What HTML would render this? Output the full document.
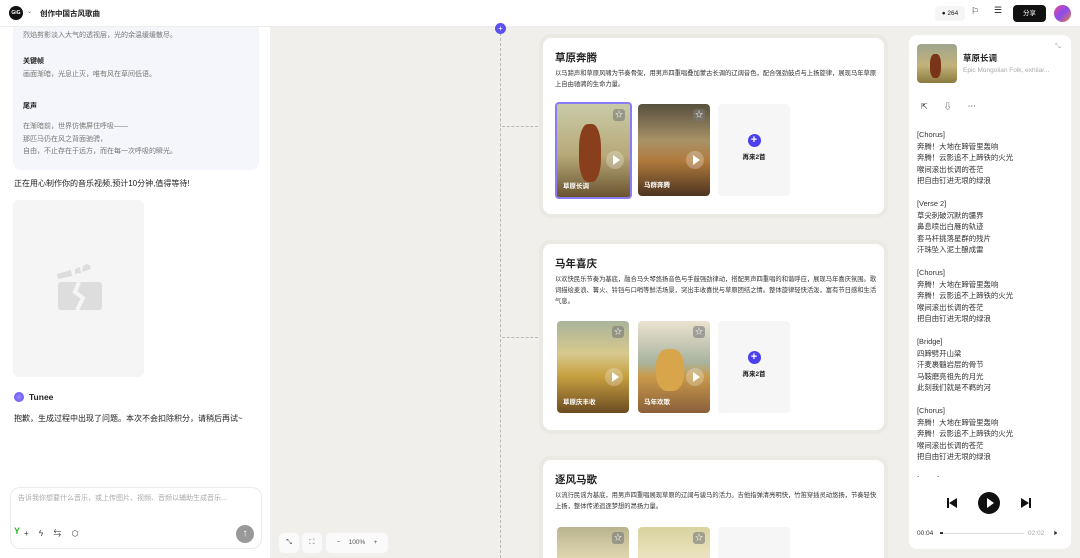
<!DOCTYPE html>
<html><head><meta charset="utf-8"><style>
*{margin:0;padding:0;box-sizing:border-box}
html{width:1080px;height:558px;overflow:hidden}
body{width:1080px;height:558px;overflow:hidden;background:#f1efeb;font-family:"Liberation Sans","Noto Sans CJK SC",sans-serif;color:#222;position:relative}
.a{position:absolute}
.hdr{left:0;top:0;width:1080px;height:27px;background:#fff;border-bottom:1px solid #eee}
.left{left:0;top:27px;width:270px;height:531px;background:#fff}
.card{background:#fff;border-radius:8px;left:543px;width:341px;box-shadow:0 0 0 4px #ebe9e4;overflow:hidden}
.card h3{position:absolute;left:12px;top:12px;font-size:10.5px;font-weight:bold}
.card p{position:absolute;left:12px;top:30px;width:322px;font-size:6.3px;line-height:11px;color:#333}
.th{position:absolute;width:74px;height:96px;border-radius:4px;overflow:hidden}
.th span{position:absolute;left:6px;bottom:7px;color:#fff;font-size:6.5px;font-weight:bold}
.star{position:absolute;right:5px;top:5px;width:12px;height:12px;border-radius:3px;background:rgba(120,120,120,.6);color:#fff;font-size:8px;text-align:center;line-height:12px}
.play{position:absolute;right:6px;top:47px;width:18px;height:18px;border-radius:50%;background:rgba(255,255,255,.25)}
.play:after{content:"";position:absolute;left:7px;top:4px;border-left:7px solid #fff;border-top:5px solid transparent;border-bottom:5px solid transparent}
.more{position:absolute;width:72px;height:92px;background:#f6f6f7;border-radius:4px;text-align:center;font-size:6.5px;font-weight:bold}
.more i{display:block;width:13px;height:13px;border-radius:50%;background:#4b3ff0;color:#fff;font-style:normal;font-size:11px;line-height:13px;margin:30px auto 4px}
.lyr{left:917px;top:129px;font-size:7.4px;line-height:11.5px;color:#333;width:150px;height:348px;overflow:hidden}
.btn{width:22px;height:22px;border-radius:6px;background:#fafafa;border:1px solid #f0f0f0}
</style></head><body>
<div class="a hdr"></div>
<div class="a" style="left:9px;top:6px;width:14px;height:14px;border-radius:50%;background:#111;color:#fff;font-size:5px;font-weight:bold;text-align:center;line-height:14px">GiG</div>
<div class="a" style="left:27px;top:8px;font-size:6px;color:#666">⌄</div>
<div class="a" style="left:40px;top:8px;font-size:7.5px;font-weight:bold">创作中国古风歌曲</div>
<div class="a" style="left:935px;top:6px;width:30px;height:15px;background:#f5f5f5;border-radius:4px;font-size:6.5px;line-height:15px;text-align:center">● 264</div>
<div class="a" style="left:971px;top:6px;font-size:9px">⚐</div>
<div class="a" style="left:994px;top:5px;font-size:9px">☰</div>
<div class="a" style="left:1013px;top:5px;width:33px;height:17px;background:#111;border-radius:4px;color:#fff;font-size:6.5px;line-height:17px;text-align:center">分享</div>
<div class="a" style="left:1054px;top:5px;width:17px;height:17px;border-radius:50%;background:linear-gradient(135deg,#e84a8c,#8a4cf0,#f07a3a)"></div>

<div class="a left"></div>
<div class="a" style="left:13px;top:27px;width:246px;height:143px;background:#f5f6fb;border-radius:0 0 8px 8px;font-size:7px;color:#777;line-height:12.5px">
<div style="position:absolute;left:10px;top:3px">烈焰剪影淡入大气的透视层，光的余温缓缓散尽。</div>
<div style="position:absolute;left:10px;top:29px;color:#222;font-weight:bold">关键帧</div>
<div style="position:absolute;left:10px;top:42px">画面渐暗，光息止灭，唯有风在草间低语。</div>
<div style="position:absolute;left:10px;top:74px;color:#222;font-weight:bold">尾声</div>
<div style="position:absolute;left:10px;top:94px">在渐暗前，世界仿佛屏住呼吸——<br>那匹马仍在风之背面驰骋，<br>自由，不止存在于远方，而在每一次呼吸的瞬光。</div>
</div>
<div class="a" style="left:14px;top:178px;font-size:8px">正在用心制作你的音乐视频,预计10分钟,值得等待!</div>
<div class="a" style="left:13px;top:200px;width:131px;height:177px;background:#f5f5f5;border-radius:6px">
<svg class="a" style="left:42px;top:60px" width="48" height="52" viewBox="0 0 48 52"><path d="M2 14l14-4 1 6-14 3z M20 9l5-2 1 6-6 1z M28 6c3-3 8-2 8 3l-9 3z" fill="#ddd"/><rect x="3" y="22" width="44" height="28" rx="3" fill="#ddd"/><path d="M24 22l-4 10 8 6-6 12" stroke="#f5f5f5" stroke-width="4" fill="none"/></svg>
</div>
<div class="a" style="left:14px;top:392px;width:10px;height:10px;border-radius:50%;background:radial-gradient(#9a8cff,#5a48f0)"></div>
<div class="a" style="left:29px;top:392px;font-size:8.5px;font-weight:bold">Tunee</div>
<div class="a" style="left:14px;top:413px;font-size:8px">抱歉，生成过程中出现了问题。本次不会扣除积分，请稍后再试~</div>
<div class="a" style="left:10px;top:487px;width:252px;height:62px;border:1px solid #ececec;border-radius:10px;background:#fff"></div>
<div class="a" style="left:18px;top:493px;font-size:7px;color:#aaa">告诉我你想要什么音乐，或上传图片、视频、音频以辅助生成音乐...</div>
<div class="a" style="left:14px;top:526px;font-size:9px;font-weight:bold;color:#2b2">Y</div>
<div class="a" style="left:24px;top:528px;font-size:8px;color:#333">+　 ϟ 　⇆ 　⬡</div>
<div class="a" style="left:236px;top:525px;width:18px;height:18px;border-radius:50%;background:#999;color:#fff;font-size:10px;text-align:center;line-height:18px">↑</div>

<div class="a" style="left:500px;top:28px;height:530px;border-left:1px dashed #bbb"></div>
<div class="a" style="left:502px;top:126px;width:36px;border-top:1px dashed #bbb"></div>
<div class="a" style="left:502px;top:337px;width:36px;border-top:1px dashed #bbb"></div>
<div class="a" style="left:495px;top:23px;width:11px;height:11px;border-radius:50%;background:#5b4ff0;color:#fff;font-size:8px;text-align:center;line-height:11px">+</div>

<div class="a card" style="top:38px;height:176px"><h3>草原奔腾</h3><p>以马蹄声和草原风啸为节奏骨架，用男声四重唱叠加蒙古长调的辽阔音色，配合强劲鼓点与上扬旋律，展现马年草原上自由驰骋的生命力量。</p>
<div class="th" style="left:12px;top:64px;width:77px;height:97px;border:2px solid #8a7cf5;background:linear-gradient(180deg,#c9cba8,#b7a978 55%,#6b5430)"><div style="position:absolute;left:22px;top:20px;width:22px;height:58px;border-radius:40%;background:#8a3f1c"></div><div class="star">☆</div><div class="play"></div><span>草原长调</span></div>
<div class="th" style="left:95px;top:66px;width:72px;height:92px;background:linear-gradient(180deg,#57503e,#a99266 40%,#b07a3c 62%,#4c3420)"><div class="star">☆</div><div class="play"></div><span>马群奔腾</span></div>
<div class="more" style="left:175px;top:66px"><i>+</i>再来2首</div></div>

<div class="a card" style="top:244px;height:186px"><h3>马年喜庆</h3><p>以欢快民乐节奏为基底，融合马头琴悠扬音色与手鼓强劲律动，搭配男声四重唱的和谐呼应，展现马年喜庆氛围。歌词描绘麦浪、篝火、铃铛与口哨等鲜活场景，突出丰收喜悦与草原团结之情。整体旋律轻快活泼，富有节日感和生活气息。</p>
<div class="th" style="left:14px;top:77px;width:72px;height:92px;background:linear-gradient(180deg,#a9b49a,#d7c88e 35%,#c7a040 60%,#6b4b22)"><div class="star">☆</div><div class="play"></div><span>草原庆丰收</span></div>
<div class="th" style="left:95px;top:77px;width:72px;height:92px;background:linear-gradient(180deg,#ece2cf,#a8b4a0 45%,#c99a4a 60%,#8a5f3a)"><div style="position:absolute;left:18px;top:28px;width:28px;height:42px;border-radius:40%;background:#d8a54a"></div><div class="star">☆</div><div class="play"></div><span>马年欢歌</span></div>
<div class="more" style="left:175px;top:77px"><i>+</i>再来2首</div></div>

<div class="a card" style="top:460px;height:98px;border-radius:8px 8px 0 0"><h3>逐风马歌</h3><p>以流行民谣为基底，用男声四重唱展现草原的辽阔与骏马的活力。吉他指弹清亮明快，竹笛穿插灵动悠扬，节奏轻快上扬，整体传递追逐梦想的昂扬力量。</p>
<div class="th" style="left:14px;top:67px;width:72px;height:31px;border-radius:4px 4px 0 0;background:linear-gradient(180deg,#b9b48f,#e0d7b0)"><div class="star">☆</div></div>
<div class="th" style="left:95px;top:67px;width:72px;height:31px;border-radius:4px 4px 0 0;background:linear-gradient(180deg,#d8d3a0,#ebe3c0)"><div class="star">☆</div></div>
<div class="more" style="left:175px;top:67px;height:31px;border-radius:4px 4px 0 0"></div></div>

<div class="a" style="left:909px;top:35px;width:162px;height:514px;background:#fff;border-radius:8px"></div>
<div class="a" style="left:917px;top:44px;width:40px;height:39px;border-radius:4px;background:linear-gradient(180deg,#9fa58e,#c2b27a 55%,#8b7a3e)"><div style="position:absolute;left:13px;top:10px;width:11px;height:24px;border-radius:40%;background:#7a3418"></div></div>
<div class="a" style="left:963px;top:52px;font-size:8.5px;font-weight:bold">草原长调</div>
<div class="a" style="left:963px;top:67px;font-size:6.5px;color:#aaa">Epic Mongolian Folk, exhilar...</div>
<div class="a" style="left:1055px;top:43px;font-size:7px;color:#aaa">⤡</div>
<div class="a" style="left:921px;top:101px;font-size:8px;color:#333">⇱　　⇩　　⋯</div>
<div class="a lyr">[Chorus]<br>奔腾！大地在蹄管里轰响<br>奔腾！云影追不上蹄铁的火光<br>喉间滚出长调的苍茫<br>把自由钉进无垠的绿浪<br><br>[Verse 2]<br>草尖刺破沉默的疆界<br>鼻息喷出白雁的轨迹<br>套马杆挑落星群的残片<br>汗珠坠入泥土酿成雷<br><br>[Chorus]<br>奔腾！大地在蹄管里轰响<br>奔腾！云影追不上蹄铁的火光<br>喉间滚出长调的苍茫<br>把自由钉进无垠的绿浪<br><br>[Bridge]<br>四蹄劈开山梁<br>汗麦裹髓岩层的骨节<br>马鞍磨亮祖先的月光<br>此刻我们就是不羁的河<br><br>[Chorus]<br>奔腾！大地在蹄管里轰响<br>奔腾！云影追不上蹄铁的火光<br>喉间滚出长调的苍茫<br>把自由钉进无垠的绿浪<br><br>[Outro]</div>
<svg class="a" style="left:946px;top:497px" width="12" height="12" viewBox="0 0 12 12"><rect x="1" y="1" width="2" height="10" fill="#111"/><path d="M11 1v10L3 6z" fill="#111"/></svg>
<div class="a" style="left:978px;top:492px;width:22px;height:22px;border-radius:50%;background:#111"></div>
<div class="a" style="left:987px;top:498px;border-left:7px solid #fff;border-top:5px solid transparent;border-bottom:5px solid transparent"></div>
<svg class="a" style="left:1020px;top:497px" width="12" height="12" viewBox="0 0 12 12"><rect x="9" y="1" width="2" height="10" fill="#111"/><path d="M1 1v10L9 6z" fill="#111"/></svg>
<div class="a" style="left:917px;top:530px;font-size:6.5px;color:#333">00:04</div>
<div class="a" style="left:940px;top:533px;width:84px;height:1px;background:#ddd"></div>
<div class="a" style="left:940px;top:532px;width:3px;height:2px;background:#333"></div>
<div class="a" style="left:1028px;top:530px;font-size:6.5px;color:#aaa">02:02</div>
<div class="a" style="left:1052px;top:528px;font-size:8px">🕨</div>

<div class="a btn" style="left:278px;top:532px;font-size:7px;text-align:center;line-height:20px;color:#444">⤡</div>
<div class="a btn" style="left:301px;top:532px;font-size:7px;text-align:center;line-height:20px;color:#444">⛶</div>
<div class="a" style="left:325px;top:532px;width:64px;height:22px;border-radius:6px;background:#fafafa;border:1px solid #f0f0f0;font-size:6.5px;line-height:20px;color:#555;text-align:center">−　 100% 　+</div>
</body></html>
